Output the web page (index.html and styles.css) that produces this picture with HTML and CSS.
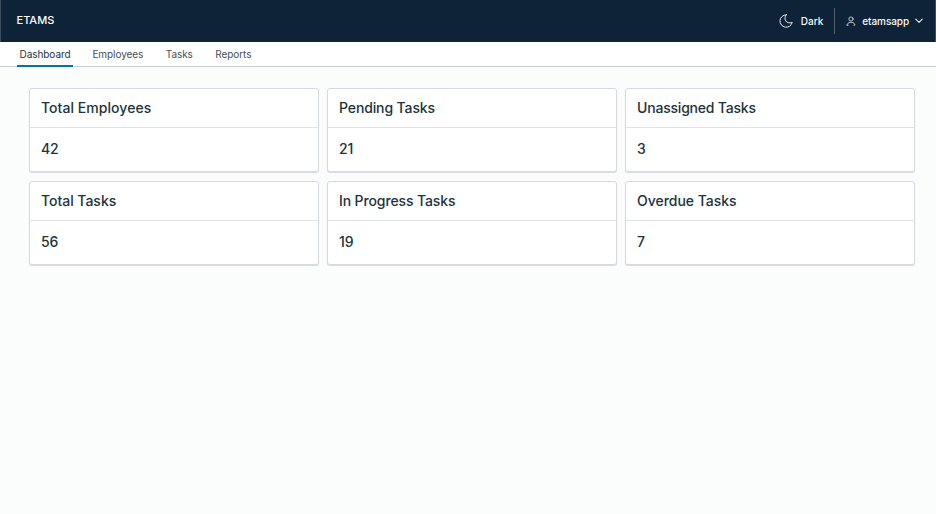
FILE: index.html
```html
<!DOCTYPE html>
<html lang="en">
<head>
<meta charset="utf-8">
<title>ETAMS</title>
<link rel="stylesheet" href="styles.css">
</head>
<body>
<header class="header">
  <span class="brand">ETAMS</span>
  <div class="actions">
    <button class="theme">
      <svg class="moon" viewBox="0 0 14 14"><path d="M7.2 .8A6.2 6.2 0 1 0 13.2 8.4C10.8 9.2 8 9 6.8 7C5.5 4.9 5.9 2.6 7.2 .8Z"/></svg>
      <span class="theme-label">Dark</span>
    </button>
    <button class="user">
      <svg class="person" viewBox="0 0 10 10"><circle cx="5" cy="3" r="2.1"/><path d="M1.2 9.2V8.2C2.1 6.9 3.5 6.2 5 6.2S7.9 6.9 8.8 8.2V9.2H7.8M1.2 9.2H2.2"/></svg>
      <span class="user-name">etamsapp</span>
      <svg class="caret" viewBox="0 0 8 6"><path d="M.8 1.2L4 4.4L7.2 1.2"/></svg>
    </button>
  </div>
</header>
<nav class="nav">
  <a class="tab active">Dashboard</a>
  <a class="tab">Employees</a>
  <a class="tab">Tasks</a>
  <a class="tab">Reports</a>
</nav>
<main class="content">
  <section class="card"><h2 class="wide">Total Employees</h2><p>42</p></section>
  <section class="card"><h2>Pending Tasks</h2><p>21</p></section>
  <section class="card"><h2 class="tight">Unassigned Tasks</h2><p>3</p></section>
  <section class="card"><h2 class="normal">Total Tasks</h2><p>56</p></section>
  <section class="card"><h2>In Progress Tasks</h2><p>19</p></section>
  <section class="card"><h2 class="normal">Overdue Tasks</h2><p>7</p></section>
</main>
</body>
</html>
```
FILE: styles.css
```css
* { box-sizing: border-box; }
body {
  margin: 0;
  height: 514px;
  overflow: hidden;
  background: #fbfdfc;
  color: #21333b;
  font-family: Inter, "Liberation Sans", sans-serif;
}
.header {
  display: flex;
  align-items: center;
  justify-content: space-between;
  height: 42px;
  padding: 0 11px 0 15.5px;
  background: #0e2338;
  border-left: 1px solid #3d4e5f;
  border-right: 1px solid #3d4e5f;
  color: #fafafa;
}
.brand { font-size: 11px; font-weight: 500; line-height: 14px; padding-bottom: 2px; }
.actions { display: flex; align-items: center; height: 26px; }
button {
  display: flex;
  align-items: center;
  height: 26px;
  padding: 0;
  border: 0;
  background: none;
  color: inherit;
  font: 500 10px/14px Inter, "Liberation Sans", sans-serif;
}
svg { fill: none; stroke: #e4e8eb; stroke-linejoin: round; stroke-linecap: round; }
.moon { width: 14px; height: 14px; margin-right: 8px; }
.theme { padding-right: 11px; border-right: 1px solid #57626d; }
.user { padding-left: 11px; }
.person { width: 10px; height: 10px; margin-right: 6px; stroke-width: .8; }
.user-name { letter-spacing: -.08px; }
.caret { width: 8px; height: 6px; margin-left: 6px; margin-right: 1px; stroke-width: 1.2; }
.nav {
  display: flex;
  gap: 16.4px;
  height: 25px;
  padding-left: 17px;
  background: #fff;
  border-bottom: 1px solid #c6d0da;
}
.tab {
  height: 25px;
  padding: 0 3px;
  color: #454f55;
  font-size: 10px;
  line-height: 25px;
  letter-spacing: -.06px;
}
.active { width: 56px; padding: 0 2.5px; color: #21333b; border-bottom: 2px solid #0072a3; }
.content {
  display: grid;
  grid-template-columns: repeat(3, 290px);
  gap: 9px 8px;
  padding: 21px 0 0 29px;
}
.card {
  height: 84px;
  background: #fff;
  border: 1px solid #d5dbe1;
  border-radius: 3px;
  box-shadow: 0 1px 1px #d5dbe1;
}
h2, p { margin: 0; padding-left: 11px; font-size: 14px; font-weight: 500; letter-spacing: -.12px; }
h2 { height: 39px; line-height: 37px; border-bottom: 1px solid #dfe3e6; }
p { line-height: 42px; }
.wide { letter-spacing: .05px; }
.normal { letter-spacing: -.03px; }
.tight { letter-spacing: -.2px; }
```
